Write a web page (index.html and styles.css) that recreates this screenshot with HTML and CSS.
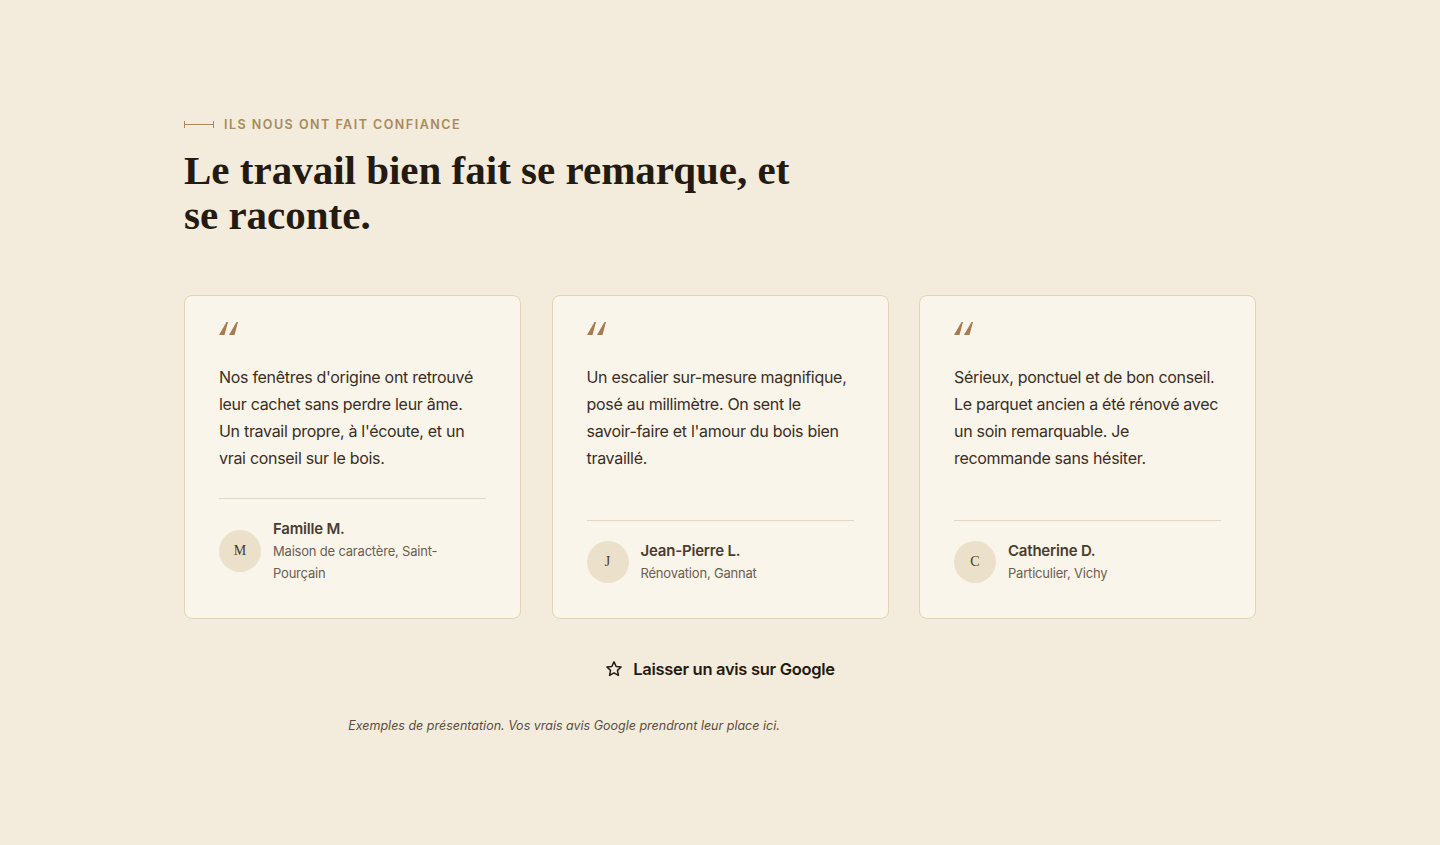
FILE: index.html
```html
<!DOCTYPE html>
<html lang="fr">
<head>
    <meta charset="UTF-8">
    <meta name="viewport" content="width=device-width, initial-scale=1.0">
    <title>Avis clients</title>
    <link rel="stylesheet" href="styles.css">
</head>
<body>
    <section class="testimonials">
        <div class="container">
            <div class="eyebrow">
                <span class="eyebrow-rule"></span>
                <span>Ils nous ont fait confiance</span>
            </div>
            <h2 class="title">Le travail bien fait se remarque, et se raconte.</h2>

            <div class="cards">
                <article class="card">
                    <svg class="quote" width="20" height="13" viewBox="0 0 20 13" aria-hidden="true">
                        <polygon points="0,13 5.5,13 9,0 7.5,0" />
                        <polygon points="10,13 15.5,13 19,0 17.5,0" />
                    </svg>
                    <p class="card-text">Nos fenêtres d'origine ont retrouvé leur cachet sans perdre leur âme. Un travail propre, à l'écoute, et un vrai conseil sur le bois.</p>
                    <div class="card-author">
                        <div class="avatar">M</div>
                        <div class="author-info">
                            <div class="author-name">Famille M.</div>
                            <div class="author-role">Maison de caractère, Saint-Pourçain</div>
                        </div>
                    </div>
                </article>

                <article class="card">
                    <svg class="quote" width="20" height="13" viewBox="0 0 20 13" aria-hidden="true">
                        <polygon points="0,13 5.5,13 9,0 7.5,0" />
                        <polygon points="10,13 15.5,13 19,0 17.5,0" />
                    </svg>
                    <p class="card-text">Un escalier sur-mesure magnifique, posé au millimètre. On sent le savoir-faire et l'amour du bois bien travaillé.</p>
                    <div class="card-author">
                        <div class="avatar">J</div>
                        <div class="author-info">
                            <div class="author-name">Jean-Pierre L.</div>
                            <div class="author-role">Rénovation, Gannat</div>
                        </div>
                    </div>
                </article>

                <article class="card">
                    <svg class="quote" width="20" height="13" viewBox="0 0 20 13" aria-hidden="true">
                        <polygon points="0,13 5.5,13 9,0 7.5,0" />
                        <polygon points="10,13 15.5,13 19,0 17.5,0" />
                    </svg>
                    <p class="card-text">Sérieux, ponctuel et de bon conseil. Le parquet ancien a été rénové avec un soin remarquable. Je recommande sans hésiter.</p>
                    <div class="card-author">
                        <div class="avatar">C</div>
                        <div class="author-info">
                            <div class="author-name">Catherine D.</div>
                            <div class="author-role">Particulier, Vichy</div>
                        </div>
                    </div>
                </article>
            </div>

            <div class="actions">
                <a class="review-link" href="#">
                    <svg width="18" height="18" viewBox="0 0 24 24" fill="none" stroke="currentColor" stroke-width="2" stroke-linejoin="round" aria-hidden="true">
                        <polygon points="12,2.5 14.9,8.6 21.5,9.4 16.6,13.9 17.9,20.5 12,17.2 6.1,20.5 7.4,13.9 2.5,9.4 9.1,8.6" />
                    </svg>
                    Laisser un avis sur Google
                </a>
            </div>

            <p class="note">Exemples de présentation. Vos vrais avis Google prendront leur place ici.</p>
        </div>
    </section>
</body>
</html>
```

FILE: styles.css
```css
body {
    margin: 0;
    padding: 0;
    background-color: #f3ebdb;
    font-family: Inter, "Noto Sans", sans-serif;
    color: #3a2e24;
}
.testimonials {
    padding: 117px 0 100px;
}
.container {
    max-width: 1072px;
    margin: 0 auto;
}
.eyebrow {
    display: flex;
    align-items: center;
    gap: 10px;
    font-size: 12.5px;
    font-weight: 600;
    letter-spacing: 0.12em;
    text-transform: uppercase;
    color: #a88a5c;
}
.eyebrow-rule {
    width: 28px;
    height: 7px;
    border-left: 1px solid #a88a5c;
    border-right: 1px solid #a88a5c;
    background: linear-gradient(#a88a5c, #a88a5c) center / 100% 1px no-repeat;
}
.title {
    max-width: 640px;
    margin: 16px 0 0;
    font-family: "Liberation Serif", serif;
    font-size: 41px;
    font-weight: 700;
    line-height: 45px;
    color: #231a12;
}
.cards {
    display: grid;
    grid-template-columns: repeat(3, 1fr);
    gap: 30.5px;
    margin-top: 57px;
}
.card {
    display: flex;
    flex-direction: column;
    padding: 26px 34px 34px;
    background-color: #faf5ea;
    border: 1px solid #e2d3b2;
    border-radius: 8px;
}
.quote {
    display: block;
    fill: #a87b4e;
}
.card-text {
    margin: 29px 0 0;
    font-size: 16px;
    line-height: 27px;
    letter-spacing: -0.3px;
    color: #3a2e24;
}
.card-author {
    display: flex;
    align-items: center;
    gap: 12px;
    margin-top: auto;
    padding-top: 19px;
    border-top: 1px solid #e8d6c4;
}
.card-text + .card-author {
    margin-top: 26px;
}
.card:not(:first-child) .card-text + .card-author {
    margin-top: auto;
}
.avatar {
    flex: 0 0 42px;
    height: 42px;
    border-radius: 50%;
    background-color: #ebe0c9;
    display: flex;
    align-items: center;
    justify-content: center;
    font-family: "Liberation Serif", serif;
    font-size: 14px;
    color: #4a3828;
}
.author-name {
    font-size: 15px;
    font-weight: 600;
    line-height: 22px;
    letter-spacing: -0.2px;
    color: #4a3c2e;
}
.author-role {
    font-size: 13px;
    line-height: 22px;
    letter-spacing: -0.2px;
    color: #6b5e50;
}
.actions {
    display: flex;
    justify-content: center;
    margin-top: 40px;
}
.review-link {
    display: flex;
    align-items: center;
    gap: 10px;
    font-size: 16.5px;
    font-weight: 600;
    letter-spacing: -0.3px;
    color: #231a12;
    text-decoration: none;
}
.note {
    max-width: 760px;
    margin: 39px 0 0;
    text-align: center;
    font-size: 12.5px;
    font-style: italic;
    color: #5a4e42;
}
```
